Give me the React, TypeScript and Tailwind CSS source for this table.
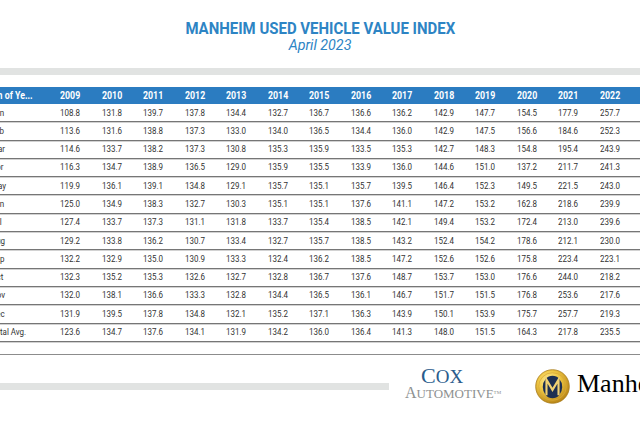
import React from "react";

const years = [2009, 2010, 2011, 2012, 2013, 2014, 2015, 2016, 2017, 2018, 2019, 2020, 2021, 2022];

const rows: [string, string[]][] = [
  ["Jan", "108.8 131.8 139.7 137.8 134.4 132.7 136.7 136.6 136.2 142.9 147.7 154.5 177.9 257.7".split(" ")],
  ["Feb", "113.6 131.6 138.8 137.3 133.0 134.0 136.5 134.4 136.0 142.9 147.5 156.6 184.6 252.3".split(" ")],
  ["Mar", "114.6 133.7 138.2 137.3 130.8 135.3 135.9 133.5 135.3 142.7 148.3 154.8 195.4 243.9".split(" ")],
  ["Apr", "116.3 134.7 138.9 136.5 129.0 135.9 135.5 133.9 136.0 144.6 151.0 137.2 211.7 241.3".split(" ")],
  ["May", "119.9 136.1 139.1 134.8 129.1 135.7 135.1 135.7 139.5 146.4 152.3 149.5 221.5 243.0".split(" ")],
  ["Jun", "125.0 134.9 138.3 132.7 130.3 135.1 135.1 137.6 141.1 147.2 153.2 162.8 218.6 239.9".split(" ")],
  ["Jul", "127.4 133.7 137.3 131.1 131.8 133.7 135.4 138.5 142.1 149.4 153.2 172.4 213.0 239.6".split(" ")],
  ["Aug", "129.2 133.8 136.2 130.7 133.4 132.7 135.7 138.5 143.2 152.4 154.2 178.6 212.1 230.0".split(" ")],
  ["Sep", "132.2 132.9 135.0 130.9 133.3 132.4 136.2 138.5 147.2 152.6 152.6 175.8 223.4 223.1".split(" ")],
  ["Oct", "132.3 135.2 135.3 132.6 132.7 132.8 136.7 137.6 148.7 153.7 153.0 176.6 244.0 218.2".split(" ")],
  ["Nov", "132.0 138.1 136.6 133.3 132.8 134.4 136.5 136.1 146.7 151.7 151.5 176.8 253.6 217.6".split(" ")],
  ["Dec", "131.9 139.5 137.8 134.8 132.1 135.2 137.1 136.3 143.9 150.1 153.9 175.7 257.7 219.3".split(" ")],
  ["Total Avg.", "123.6 134.7 137.6 134.1 131.9 134.2 136.0 136.4 141.3 148.0 151.5 164.3 217.8 235.5".split(" ")],
];

function Cell({ children, head }: { children: React.ReactNode; head?: boolean }) {
  return (
    <div className="w-[41.5px] shrink-0 whitespace-nowrap">
      <span
        className={
          head
            ? "inline-block origin-left [transform:scaleX(0.88)]"
            : "inline-block origin-left [transform:scaleX(0.84)]"
        }
      >
        {children}
      </span>
    </div>
  );
}

function ManheimCoin() {
  return (
    <svg width="35" height="35" viewBox="0 0 36 36">
      <defs>
        <radialGradient id="gold" cx="40%" cy="35%" r="70%">
          <stop offset="0%" stopColor="#fff2a8" />
          <stop offset="45%" stopColor="#f0c844" />
          <stop offset="100%" stopColor="#b37f12" />
        </radialGradient>
      </defs>
      <circle cx="18" cy="18" r="17.3" fill="url(#gold)" stroke="#a87a1a" strokeWidth="0.8" />
      <circle cx="18" cy="18" r="14.2" fill="none" stroke="#d9a93a" strokeWidth="0.8" />
      <ellipse cx="18" cy="18.5" rx="10" ry="11.5" fill="#1d2f52" />
      <path d="M11.8 27 V11 L18 21.5 L24.2 11 V27" fill="none" stroke="#f1d173" strokeWidth="2.2" strokeLinejoin="miter" />
    </svg>
  );
}

export default function App() {
  return (
    <div className="w-[640px] h-[425px] overflow-hidden bg-white font-['Roboto',sans-serif]">
      {/* Title */}
      <div className="pt-[20px] text-center text-[#2d84c4]">
        <div className="h-[17px] leading-[17px] text-[17px] font-bold">
          <span className="inline-block [transform:scaleX(0.88)] whitespace-nowrap">MANHEIM USED VEHICLE VALUE INDEX</span>
        </div>
        <div className="mt-[1px] h-[15px] leading-[15px] text-[15px] italic">
          <span className="inline-block [transform:scaleX(0.95)] whitespace-nowrap">April 2023</span>
        </div>
      </div>

      <div className="mt-[15px] h-[7px] bg-[#e1e3e2]" />

      {/* Table */}
      <div className="mt-[12px] overflow-hidden">
        <div className="flex h-[17px] items-center bg-[#2b7cc1] text-white font-bold text-[10px]">
          <div className="w-[60px] shrink-0 overflow-hidden whitespace-nowrap">
            <span className="inline-block -ml-[23px] origin-left [transform:scaleX(0.88)]">Month of Ye...</span>
          </div>
          {years.map((y) => (
            <Cell key={y} head>
              {y}
            </Cell>
          ))}
        </div>
        {rows.map(([m, vals]) => (
          <div
            key={m}
            className="flex h-[18.3px] items-center border-b border-[#767676] shadow-[0_1px_0_#d2d2d2] text-[9.5px] text-[#333]"
          >
            <div className="w-[60px] shrink-0 overflow-hidden whitespace-nowrap">
              <span className="inline-block -ml-[9px] origin-left [transform:scaleX(0.84)]">{m}</span>
            </div>
            {vals.map((v, i) => (
              <Cell key={i}>{v}</Cell>
            ))}
          </div>
        ))}
        <div className="h-[13px] border-b border-[#8c8c8c]" />
      </div>

      {/* Footer */}
      <div className="mt-[4px] flex items-start h-[50px]">
        <div className="mt-[24px] h-[7px] w-[389px] shrink-0 bg-[#e1e3e2]" />
        <div className="ml-[16px] w-[130px] shrink-0 mt-[7px] font-['Liberation_Serif',serif]">
          <div className="pl-[16px] text-[22px] leading-[19px] text-[#2a5c8c] whitespace-nowrap">
            <span className="text-[22px]">C</span>
            <span className="text-[19px]">OX</span>
          </div>
          <div className="text-[16px] leading-[13px] text-[#8e9191] whitespace-nowrap">
            <span>A</span>
            <span className="text-[13px]">UTOMOTIVE</span>
            <span className="text-[5px] align-top">TM</span>
          </div>
        </div>
        <div className="mt-[10px] shrink-0">
          <ManheimCoin />
        </div>
        <div className="ml-[7px] mt-[12px] shrink-0 whitespace-nowrap font-['Liberation_Serif',serif] text-[26px] leading-[26px] text-black">
          Manheim
        </div>
      </div>
    </div>
  );
}
